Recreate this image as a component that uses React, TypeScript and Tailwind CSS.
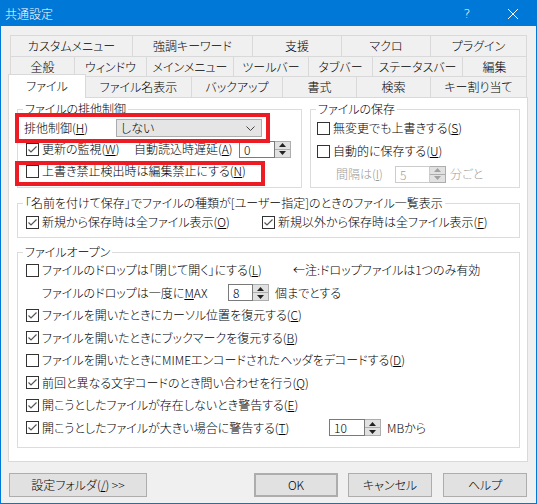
import React from "react";

const Acc = ({ k }: { k: string }) => (
  <>
    (<u>{k}</u>)
  </>
);

function Check({ on }: { on?: boolean }) {
  return (
    <span className="inline-flex h-[13px] w-[13px] shrink-0 items-center justify-center border border-[#333] bg-white">
      {on && (
        <svg width="11" height="11" viewBox="0 0 11 11">
          <path d="M1.5 5.5 L4 8 L9.5 2.5" fill="none" stroke="#555" strokeWidth="1.2" />
        </svg>
      )}
    </span>
  );
}

function CheckRow({ on, children, className }: { on?: boolean; children: React.ReactNode; className?: string }) {
  return (
    <div className={`flex items-center gap-[3px] ${className ?? ""}`}>
      <Check on={on} />
      <span className="whitespace-nowrap">{children}</span>
    </div>
  );
}

function Arrow({ up, dis }: { up?: boolean; dis?: boolean }) {
  return (
    <svg width="7" height="4" viewBox="0 0 7 4">
      <path d={up ? "M0 4 L3.5 0 L7 4Z" : "M0 0 L3.5 4 L7 0Z"} fill={dis ? "#a0a0a0" : "#222"} />
    </svg>
  );
}

function Spin({ value, edit, dis }: { value: string; edit: string; dis?: boolean }) {
  return (
    <div className="flex h-[17px]">
      <div
        className={`${edit} border bg-white pl-[4px] text-[12px] leading-[15px] ${dis ? "border-[#cccccc] text-[#a0a0a0]" : "border-[#7a7a7a]"}`}
      >
        {value}
      </div>
      <div className="flex w-[16px] flex-col border-y border-r border-[#adadad] bg-[#e1e1e1]">
        <div className="flex flex-1 items-center justify-center border-b border-[#adadad]">
          <Arrow up dis={dis} />
        </div>
        <div className="flex flex-1 items-center justify-center">
          <Arrow dis={dis} />
        </div>
      </div>
    </div>
  );
}

function Tab({ label, w, last }: { label: string; w: string; last?: boolean }) {
  return (
    <div
      className={`${w} flex items-center justify-center border-l border-t border-[#d9d9d9] bg-[#f0f0f0] ${last ? "border-r" : ""}`}
    >
      {label}
    </div>
  );
}

const row1: [string, string][] = [
  ["カスタムメニュー", "w-[122px]"],
  ["強調キーワード", "w-[120px]"],
  ["支援", "w-[89px]"],
  ["マクロ", "w-[89px]"],
  ["プラグイン", "w-[97px]"],
];
const row2: [string, string][] = [
  ["全般", "w-[64px]"],
  ["ウィンドウ", "w-[72px]"],
  ["メインメニュー", "w-[87px]"],
  ["ツールバー", "w-[75px]"],
  ["タブバー", "w-[64px]"],
  ["ステータスバー", "w-[90px]"],
  ["編集", "w-[65px]"],
];

function Btn({ children, className }: { children: React.ReactNode; className?: string }) {
  return (
    <button className={`h-[24px] w-[84px] border border-[#adadad] bg-[#e1e1e1] text-[12px] ${className ?? ""}`}>
      {children}
    </button>
  );
}

export default function App() {
  return (
    <div className="relative flex h-[504px] w-[537px] flex-col border border-[#0078d7] bg-[#f0f0f0] font-['Noto_Sans_CJK_JP',sans-serif] text-[12px] leading-[14px] font-light text-black [font-feature-settings:'palt']">
      {/* title bar */}
      <div className="flex h-[25px] items-center bg-[#0078d7] pl-[4px] text-white">
        <span className="text-[12px]">共通設定</span>
        <div className="ml-auto flex h-full">
          <div className="flex w-[46px] items-center justify-center font-['DejaVu_Sans',sans-serif] text-[13px]">?</div>
          <div className="flex w-[46px] items-center justify-center">
            <svg width="10" height="10" viewBox="0 0 10 10">
              <path d="M0 0 L10 10 M10 0 L0 10" stroke="#fff" strokeWidth="1" />
            </svg>
          </div>
        </div>
      </div>

      {/* tabs */}
      <div className="ml-[9px] mt-[9px] flex h-[21px]">
        {row1.map(([l, w], i) => (
          <Tab key={l} label={l} w={w} last={i === row1.length - 1} />
        ))}
      </div>
      <div className="ml-[9px] flex h-[20px]">
        {row2.map(([l, w], i) => (
          <Tab key={l} label={l} w={w} last={i === row2.length - 1} />
        ))}
      </div>
      <div className="ml-[7px] flex h-[21px] items-end">
        <div className="relative z-10 -mb-px flex h-[24px] w-[78px] items-center justify-center border-x border-t border-[#d9d9d9] bg-white pb-[2px]">
          ファイル
        </div>
        <div className="flex h-full w-[105px] items-center justify-center border-t border-[#d9d9d9]">ファイル名表示</div>
        <Tab label="バックアップ" w="w-[91px] h-full" />
        <Tab label="書式" w="w-[74px] h-full" />
        <Tab label="検索" w="w-[74px] h-full" />
        <Tab label="キー割り当て" w="w-[97px] h-full" last />
      </div>

      {/* panel */}
      <div className="ml-[7px] flex h-[365px] w-[520px] flex-col border border-[#d9d9d9] bg-white pl-[8px] pt-[4px]">
        <div className="flex gap-[8px]">
          <fieldset className="h-[86px] w-[285px] border border-[#dcdcdc]">
            <legend className="ml-[5px] px-[2px]">ファイルの排他制御</legend>
            <div className="flex h-[22px] items-center pl-[6px] pt-[2px]">
              <span className="w-[92px]">
                排他制御<Acc k="H" />
              </span>
              <div className="flex h-[18px] w-[146px] items-center border border-[#adadad] bg-[#e5e5e5] pl-[4px] pr-[6px]">
                <span>しない</span>
                <svg className="ml-auto" width="9" height="5" viewBox="0 0 9 5">
                  <path d="M0.5 0.5 L4.5 4.5 L8.5 0.5" fill="none" stroke="#444" strokeWidth="1" />
                </svg>
              </div>
            </div>
            <div className="flex h-[22px] items-center pl-[8px]">
              <CheckRow on className="w-[108px]">
                更新の監視<Acc k="W" />
              </CheckRow>
              <span className="w-[105px] whitespace-nowrap">
                自動読込時遅延<Acc k="A" />
              </span>
              <Spin value="0" edit="w-[36px]" />
            </div>
            <div className="flex h-[22px] items-center pl-[8px]">
              <CheckRow>
                上書き禁止検出時は編集禁止にする<Acc k="N" />
              </CheckRow>
            </div>
          </fieldset>

          <fieldset className="h-[86px] w-[210px] border border-[#dcdcdc]">
            <legend className="ml-[5px] px-[2px]">ファイルの保存</legend>
            <div className="flex h-[22px] items-center pl-[6px] pt-[2px]">
              <CheckRow>
                無変更でも上書きする<Acc k="S" />
              </CheckRow>
            </div>
            <div className="flex h-[26px] items-center pl-[6px]">
              <CheckRow>
                自動的に保存する<Acc k="U" />
              </CheckRow>
            </div>
            <div className="flex h-[20px] items-center pl-[25px] text-[#9a9a9a]">
              <span className="w-[59px] whitespace-nowrap">
                間隔は<Acc k="I" />
              </span>
              <Spin value="5" edit="w-[35px]" dis />
              <span className="ml-[4px]">分ごと</span>
            </div>
          </fieldset>
        </div>

        <fieldset className="mt-[8px] h-[42px] w-[503px] border border-[#dcdcdc]">
          <legend className="ml-[5px] px-[2px]">「名前を付けて保存」でファイルの種類が[ユーザー指定]のときのファイル一覧表示</legend>
          <div className="flex h-[22px] items-center pl-[8px] pt-[2px]">
            <CheckRow on className="w-[236px]">
              新規から保存時は全ファイル表示<Acc k="O" />
            </CheckRow>
            <CheckRow on>
              新規以外から保存時は全ファイル表示<Acc k="F" />
            </CheckRow>
          </div>
        </fieldset>

        <fieldset className="mt-[7px] h-[203px] w-[503px] border border-[#dcdcdc]">
          <legend className="ml-[5px] px-[2px]">ファイルオープン</legend>
          <div className="flex flex-col pl-[8px]">
            <div className="flex h-[22.5px] items-center">
              <CheckRow className="w-[267px]">
                ファイルのドロップは「閉じて開く」にする<Acc k="L" />
              </CheckRow>
              <span>←注:ドロップファイルは1つのみ有効</span>
            </div>
            <div className="flex h-[22.5px] items-center pl-[16px]">
              <span className="w-[186px] whitespace-nowrap">
                ファイルのドロップは一度に<u>M</u>AX
              </span>
              <Spin value="8" edit="w-[25px]" />
              <span className="ml-[6px]">個までとする</span>
            </div>
            <div className="flex h-[22.5px] items-center">
              <CheckRow on>
                ファイルを開いたときにカーソル位置を復元する<Acc k="C" />
              </CheckRow>
            </div>
            <div className="flex h-[22.5px] items-center">
              <CheckRow on>
                ファイルを開いたときにブックマークを復元する<Acc k="B" />
              </CheckRow>
            </div>
            <div className="flex h-[22.5px] items-center">
              <CheckRow>
                ファイルを開いたときにMIMEエンコードされたヘッダをデコードする<Acc k="D" />
              </CheckRow>
            </div>
            <div className="flex h-[22.5px] items-center">
              <CheckRow on>
                前回と異なる文字コードのとき問い合わせを行う<Acc k="Q" />
              </CheckRow>
            </div>
            <div className="flex h-[22.5px] items-center">
              <CheckRow on>
                開こうとしたファイルが存在しないとき警告する<Acc k="E" />
              </CheckRow>
            </div>
            <div className="flex h-[22.5px] items-center">
              <CheckRow on className="w-[303px]">
                開こうとしたファイルが大きい場合に警告する<Acc k="T" />
              </CheckRow>
              <Spin value="10" edit="w-[36px]" />
              <span className="ml-[6px]">MBから</span>
            </div>
          </div>
        </fieldset>
      </div>

      {/* buttons */}
      <div className="mt-[11px] flex pl-[8px]">
        <Btn className="w-[138px]">
          設定フォルダ(<u>/</u>) &gt;&gt;
        </Btn>
        <Btn className="ml-[107px] border-2 border-[#0078d7]">OK</Btn>
        <Btn className="ml-[10px]">キャンセル</Btn>
        <Btn className="ml-[11px]">ヘルプ</Btn>
      </div>

      {/* red annotation boxes */}
      <div className="absolute left-[14px] top-[112px] h-[30px] w-[255px] border-4 border-[#ed1c24]" />
      <div className="absolute left-[14px] top-[160px] h-[25px] w-[250px] border-4 border-[#ed1c24]" />
    </div>
  );
}
